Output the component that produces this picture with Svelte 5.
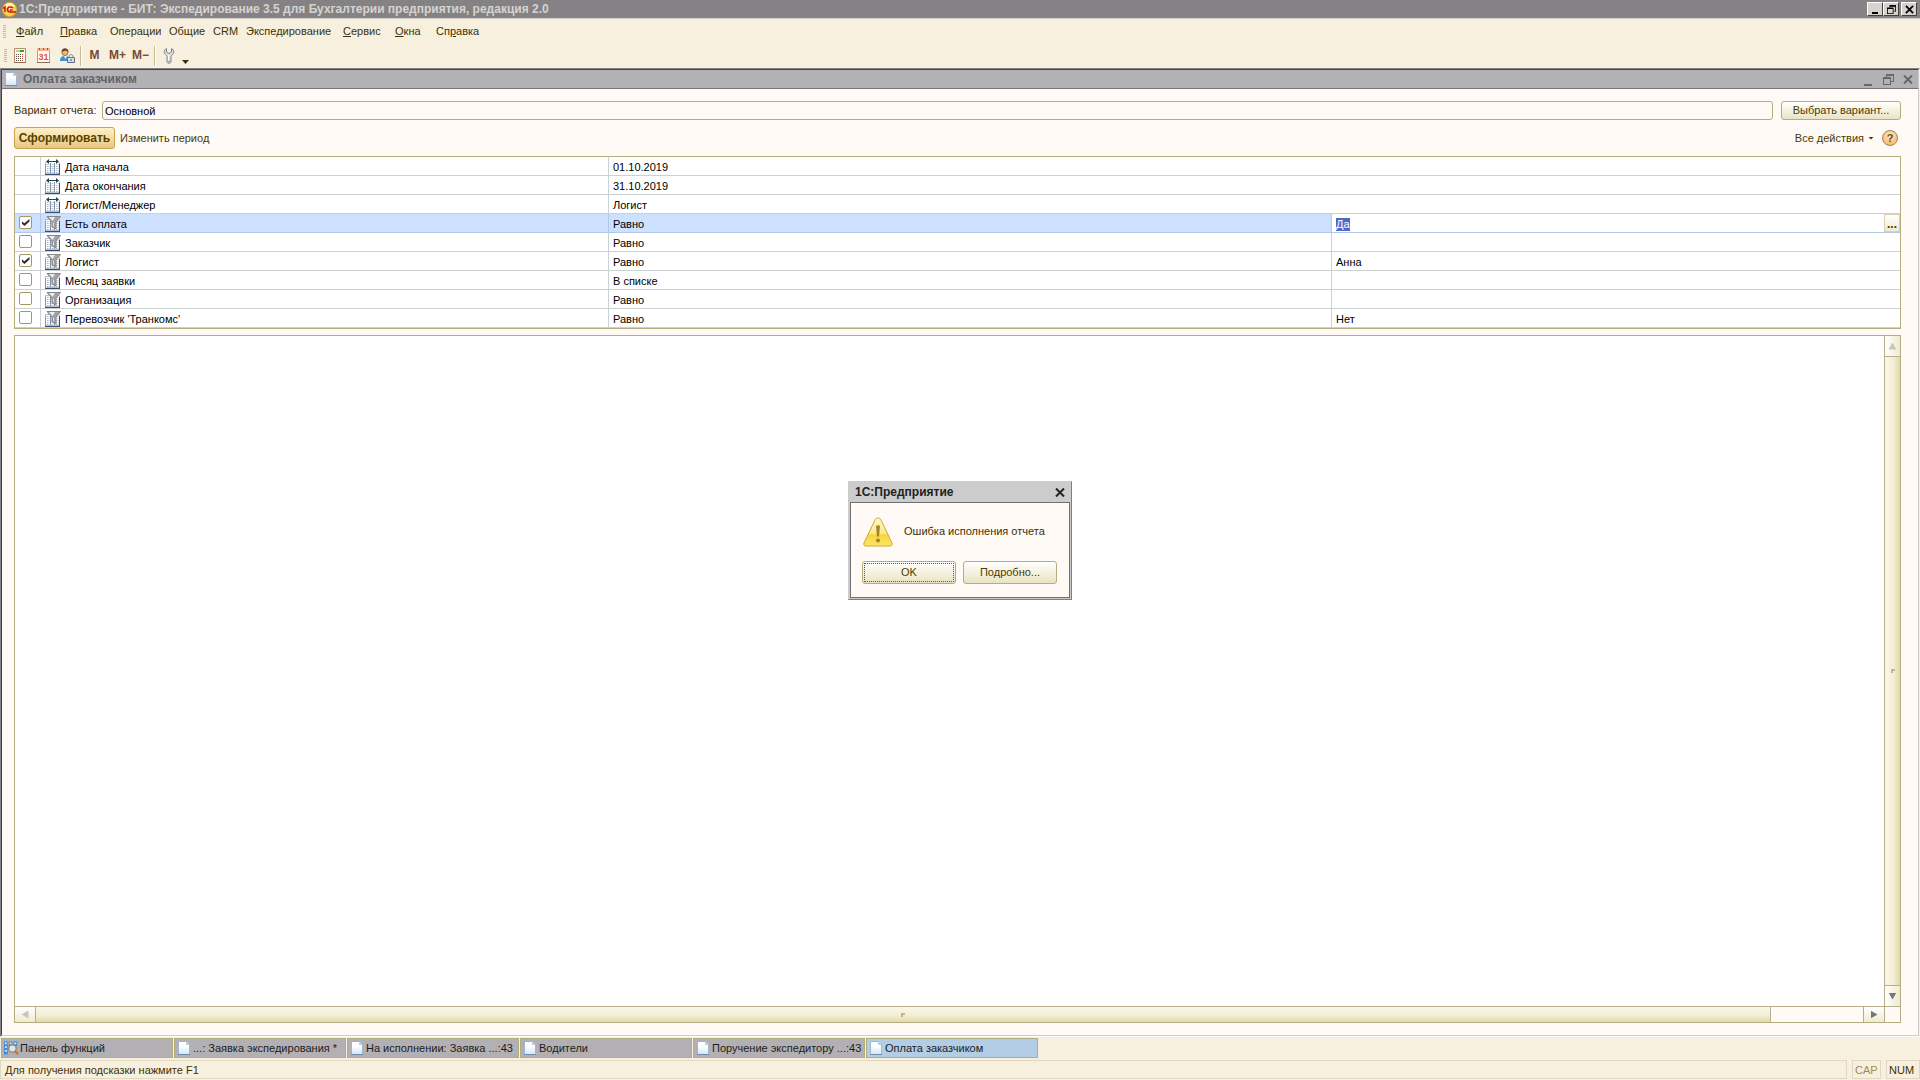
<script lang="ts">
	import { onMount } from 'svelte';

	type MenuItem = { before: string; key: string; after: string };
	type FilterRow = {
		kind: 'param' | 'filter';
		checked?: boolean;
		name: string;
		condition: string;
		value: string;
	};
	type WindowTab = { title: string; icon: 'panel' | 'doc'; active?: boolean };

	const menu: MenuItem[] = [
		{ before: '', key: 'Ф', after: 'айл' },
		{ before: '', key: 'П', after: 'равка' },
		{ before: 'Операции', key: '', after: '' },
		{ before: 'Общие', key: '', after: '' },
		{ before: 'CRM', key: '', after: '' },
		{ before: 'Экспедирование', key: '', after: '' },
		{ before: '', key: 'С', after: 'ервис' },
		{ before: '', key: 'О', after: 'кна' },
		{ before: 'Сп', key: 'р', after: 'авка' }
	];

	let rows: FilterRow[] = $state([
		{ kind: 'param', name: 'Дата начала', condition: '01.10.2019', value: '' },
		{ kind: 'param', name: 'Дата окончания', condition: '31.10.2019', value: '' },
		{ kind: 'param', name: 'Логист/Менеджер', condition: 'Логист', value: '' },
		{ kind: 'filter', checked: true, name: 'Есть оплата', condition: 'Равно', value: 'Да' },
		{ kind: 'filter', checked: false, name: 'Заказчик', condition: 'Равно', value: '' },
		{ kind: 'filter', checked: true, name: 'Логист', condition: 'Равно', value: 'Анна' },
		{ kind: 'filter', checked: false, name: 'Месяц заявки', condition: 'В списке', value: '' },
		{ kind: 'filter', checked: false, name: 'Организация', condition: 'Равно', value: '' },
		{ kind: 'filter', checked: false, name: "Перевозчик 'Транкомс'", condition: 'Равно', value: 'Нет' }
	]);

	const tabs: WindowTab[] = [
		{ title: 'Панель функций', icon: 'panel' },
		{ title: '...: Заявка экспедирования *', icon: 'doc' },
		{ title: 'На исполнении: Заявка ...:43', icon: 'doc' },
		{ title: 'Водители', icon: 'doc' },
		{ title: 'Поручение экспедитору ...:43', icon: 'doc' },
		{ title: 'Оплата заказчиком', icon: 'doc', active: true }
	];

	const selectedRow = 3;
	let variant = $state('Основной');
	let dialogOpen = $state(true);
	let editor: HTMLInputElement | null = $state(null);

	onMount(() => {
		editor?.focus();
		editor?.select();
	});

	function closeDialog() {
		dialogOpen = false;
	}
</script>

{#snippet docIcon()}
	<svg class="icon-doc" viewBox="0 0 12 14" aria-hidden="true">
		<defs>
			<linearGradient id="sheet" x1="0" y1="0" x2="0" y2="1">
				<stop offset=".4" stop-color="#fdfeff" />
				<stop offset="1" stop-color="#d3e3f5" />
			</linearGradient>
		</defs>
		<path d="M.5.5h7.500l3.500 3.500v9.500H.5z" fill="url(#sheet)" stroke="#9db6d0" />
		<path d="M8 0v4h4z" fill="#b4d3e2" />
		<path d="M0 13.500h12" stroke="#6f8cab" />
	</svg>
{/snippet}

{#snippet restoreIcon()}
	<svg class="icon-restore" viewBox="0 0 11 11" aria-hidden="true">
		<path d="M3 0h8v8H8V7h2V2H4v1H3z" fill="currentColor" />
		<path d="M0 3h8v8H0zM1 5v5h6V5z" fill="currentColor" fill-rule="evenodd" />
	</svg>
{/snippet}

{#snippet closeIcon()}
	<svg class="icon-close" viewBox="0 0 10 9" aria-hidden="true">
		<path d="M1 .5l8 8M9 .5l-8 8" stroke="currentColor" stroke-width="2" />
	</svg>
{/snippet}

{#snippet gridIcon(kind: 'param' | 'filter')}
	<svg class="icon-grid" viewBox="0 0 16 16" aria-hidden="true">
		<path d="M.5 3.500h14v11H.5z" fill="#fff" stroke="#b4bfce" />
		<path d="M5.500 4v10M9.500 4v10" stroke="#8795aa" />
		<path d="M2.500 5v9M4 5v9M7 5v9M8 5v9M11.500 5v9M13 5v9" stroke="#a9b7cb" stroke-dasharray="1 1" />
		<path d="M0 15.500h15M14.500 5v11" stroke="#38506f" />
		<path d="M.5 5v10" stroke="#8795aa" />
		{#if kind === 'param'}
			<path d="M1 3L4 0v2h7V0l3 3-3 3V4H4v2z" fill="#fff" />
			<path d="M1 2.500L4 0v2h7V0l3 2.500L11 5V3H4v2z" fill="#274455" />
		{:else}
			<path d="M2 .5h13.500L11 6v7L7 11V6z" fill="#a3a3a6" stroke="#86868a" />
			<path d="M4 1h6L7.500 5z" fill="#ededee" />
			<path d="M8.500 6.500v4" stroke="#dcdcde" />
		{/if}
	</svg>
{/snippet}

<div class="app">
	<header class="titlebar">
		<svg class="logo" viewBox="0 0 15 15" aria-hidden="true">
			<circle cx="7.500" cy="7.500" r="7" fill="#fbd04a" stroke="#e0a528" />
			<ellipse cx="7.500" cy="4" rx="5" ry="3" fill="#fff3b8" />
			<path d="M1 6.500l2-1.500v5M11 6C9.500 4.500 5.500 4.500 5.500 7.500c0 2 1.500 2.500 3 2.500H14M10.500 8H8" fill="none" stroke="#d51318" stroke-width="1.500" />
		</svg>
		<h1>1С:Предприятие - БИТ: Экспедирование 3.5 для Бухгалтерии предприятия, редакция 2.0</h1>
		<div class="window-buttons">
			<button type="button" aria-label="Свернуть"><span class="icon-min"></span></button>
			<button type="button" aria-label="Восстановить">{@render restoreIcon()}</button>
			<button type="button" class="gap" aria-label="Закрыть">{@render closeIcon()}</button>
		</div>
	</header>

	<nav class="menubar">
		<span class="grip"></span>
		{#each menu as item}
			<button type="button">{item.before}{#if item.key}<u>{item.key}</u>{/if}{item.after}</button>
		{/each}
	</nav>

	<div class="toolbar">
		<span class="grip"></span>
		<button type="button" aria-label="Калькулятор">
			<svg class="icon-tool" viewBox="0 0 16 16" aria-hidden="true">
				<path d="M1.500.5h11v14h-11z" fill="#fffdf6" stroke="#b58f6c" />
				<path d="M1 14.500h12" stroke="#8e6f53" />
				<path d="M3 3h4" stroke="#b9cfa8" stroke-width="2" />
				<path d="M7 3h4" stroke="#2ba02b" stroke-width="2" />
				<path d="M3 6.500h5M3 8.500h5M3 10.500h5M3 12.500h5" stroke="#4d4a3c" stroke-dasharray="1 1" />
				<path d="M9 6.500h2M9 8.500h2M9 10.500h2M9 12.500h2" stroke="#cb3b25" stroke-dasharray="1 1" />
			</svg>
		</button>
		<button type="button" aria-label="Календарь">
			<svg class="icon-tool" viewBox="0 0 16 16" aria-hidden="true">
				<path d="M1.500.5h12v14h-12z" fill="#fffaf4" stroke="#c99a78" />
				<path d="M1 0h13v3H1z" fill="#f0b58d" />
				<path d="M3.500 0v2M7.500 0v2M11.500 0v2" stroke="#9a5c36" />
				<path d="M1 14.500h13" stroke="#8e6f53" />
				<text x="7.500" y="12" text-anchor="middle" class="day">31</text>
			</svg>
		</button>
		<button type="button" aria-label="Пользователи">
			<svg class="icon-tool" viewBox="0 0 16 16" aria-hidden="true">
				<path d="M1 13C1 9 3 8 6 8s5 1 5 5z" fill="#3f93cc" />
				<path d="M5 8l1.500 3L8 8z" fill="#fff" />
				<circle cx="6" cy="4.500" r="3" fill="#f2b97c" stroke="#a56a35" />
				<path d="M2.500 4c0-5 7-5 7 0l-3-1.500z" fill="#6b421f" />
				<path d="M10 10V8.500c0-2.500 4-2.500 4 0V10" fill="none" stroke="#70819a" />
				<path d="M8.500 9.500h7v5h-7z" fill="#d5dfea" stroke="#61738c" />
				<path d="M12 11v2" stroke="#44566b" />
			</svg>
		</button>
		<span class="divider"></span>
		<button type="button" class="memory">M</button>
		<button type="button" class="memory">M+</button>
		<button type="button" class="memory">M−</button>
		<span class="divider"></span>
		<button type="button" aria-label="Настройки">
			<svg class="icon-tool" viewBox="0 0 16 16" aria-hidden="true">
				<path d="M5.500.5v3.500L8 5.500 10.500 4V.5c3 1.500 3 5 0 7L10 8.500v5c0 2.500-4 2.500-4 0v-5L5.500 7.500c-3-2-3-5.500 0-7z" fill="#dcdcdc" stroke="#858585" />
				<path d="M7.500 7v6" stroke="#fff" />
				<circle cx="8" cy="13.500" r=".7" fill="#666" />
			</svg>
		</button>
		<button type="button" class="more" aria-label="Добавить или удалить кнопки"></button>
	</div>

	<section class="mdi">
		<header class="mdi-title">
			{@render docIcon()}
			<h2>Оплата заказчиком</h2>
			<div class="mdi-buttons">
				<button type="button" aria-label="Свернуть окно"><span class="icon-min"></span></button>
				<button type="button" aria-label="Восстановить окно">{@render restoreIcon()}</button>
				<button type="button" aria-label="Закрыть окно">{@render closeIcon()}</button>
			</div>
		</header>

		<main class="form">
			<div class="variant">
				<label for="variant">Вариант отчета:</label>
				<input id="variant" type="text" bind:value={variant} />
				<button type="button" class="btn">Выбрать вариант...</button>
			</div>

			<div class="commands">
				<button type="button" class="btn-primary">Сформировать</button>
				<button type="button" class="link">Изменить период</button>
				<button type="button" class="link actions">Все действия<span class="caret"></span></button>
				<button type="button" class="help" aria-label="Справка">?</button>
			</div>

			<table class="filters">
				<colgroup>
					<col class="col-check" />
					<col class="col-name" />
					<col class="col-condition" />
					<col />
				</colgroup>
				<tbody>
					{#each rows as row, index (row.name)}
						<tr class:selected={index === selectedRow}>
							<td class="check">
								{#if row.kind === 'filter'}
									<input type="checkbox" aria-label={row.name} bind:checked={row.checked} />
								{/if}
							</td>
							<td>
								<span class="name">{@render gridIcon(row.kind)}{row.name}</span>
							</td>
							<td colspan={row.kind === 'param' ? 2 : 1}>{row.condition}</td>
							{#if row.kind === 'filter'}
								{#if index === selectedRow}
									<td class="edit">
										<div class="editor">
											<input type="text" aria-label={row.name} bind:value={row.value} bind:this={editor} />
											<button type="button">...</button>
										</div>
									</td>
								{:else}
									<td>{row.value}</td>
								{/if}
							{/if}
						</tr>
					{/each}
				</tbody>
			</table>

			<div class="report">
				<div class="sheet"></div>
				<div class="vscroll">
					<button type="button" aria-label="Вверх"><span class="arrow up"></span></button>
					<div class="thumb"><span class="dot"></span></div>
					<button type="button" aria-label="Вниз"><span class="arrow down"></span></button>
				</div>
				<div class="hscroll">
					<button type="button" aria-label="Влево"><span class="arrow left"></span></button>
					<div class="thumb"><span class="dot"></span></div>
					<div class="track"></div>
					<button type="button" aria-label="Вправо"><span class="arrow right"></span></button>
				</div>
				<div class="corner"></div>
			</div>
		</main>
	</section>

	<nav class="tabs">
		{#each tabs as tab}
			<button type="button" class:active={tab.active}>
				{#if tab.icon === 'panel'}
					<svg class="icon-panel" viewBox="0 0 16 16" aria-hidden="true">
						<path d="M0 1h4v14H0zM5 1h4v6H5zM10 1h4v5h-4z" fill="#3c8be0" />
						<path d="M1 2h2v2H1zM6 2h2v2H6zM11 2h2v2h-2zM1 6h2v2H1zM1 10h2v2H1z" fill="#d5ebff" />
						<circle cx="9" cy="8.500" r="4" fill="#d7e9f5" stroke="#b08258" stroke-width="1.500" />
						<path d="M12 11.500l3 3" stroke="#c9742a" stroke-width="2.500" />
					</svg>
				{:else}
					{@render docIcon()}
				{/if}
				<span>{tab.title}</span>
			</button>
		{/each}
	</nav>

	<footer class="status">
		<span class="hint">Для получения подсказки нажмите F1</span>
		<span class="key off">CAP</span>
		<span class="key">NUM</span>
	</footer>

	{#if dialogOpen}
		<div class="overlay">
			<div class="dialog" role="alertdialog" aria-labelledby="dialog-title" aria-describedby="dialog-text">
				<header>
					<h2 id="dialog-title">1С:Предприятие</h2>
					<button type="button" aria-label="Закрыть" onclick={closeDialog}>{@render closeIcon()}</button>
				</header>
				<div class="dialog-body">
					<div class="message">
						<svg viewBox="0 0 30 30" aria-hidden="true">
							<defs>
								<linearGradient id="warn" x1="0" y1="0" x2="0" y2="1">
									<stop offset="0" stop-color="#fdf7d0" />
									<stop offset=".55" stop-color="#fbe88a" />
									<stop offset=".6" stop-color="#f6d63a" />
									<stop offset="1" stop-color="#fbe567" />
								</linearGradient>
							</defs>
							<path d="M15 1c1.500 0 2.500.7 3 2l11 23c.6 1.800 0 3-2 3H3c-2 0-2.600-1.200-2-3L12 3c.5-1.300 1.500-2 3-2z" fill="url(#warn)" stroke="#d3a92c" />
							<path d="M13 8.500h4l-1 11h-2z" fill="#a5822a" />
							<circle cx="15" cy="23.500" r="2" fill="#a5822a" />
						</svg>
						<p id="dialog-text">Ошибка исполнения отчета</p>
					</div>
					<div class="dialog-buttons">
						<button type="button" class="btn default" onclick={closeDialog}>OK</button>
						<button type="button" class="btn">Подробно...</button>
					</div>
				</div>
			</div>
		</div>
	{/if}
</div>

<style>
	:global(body) {
		background: #f7f0de;
	}

	.app {
		display: flex;
		flex-direction: column;
		min-height: 100vh;
		background: #f7f0de;
		color: #403003;
		font: 11px/13px 'Liberation Sans', Arial, sans-serif;
	}

	.app :is(*, *::before, *::after) {
		box-sizing: border-box;
	}

	button,
	input {
		margin: 0;
		padding: 0;
		border: 0;
		border-radius: 0;
		background: none;
		color: inherit;
		font: inherit;
		outline: none;
		white-space: nowrap;
	}

	h1,
	h2,
	p {
		margin: 0;
		font-size: 12px;
		white-space: nowrap;
	}

	p {
		font-size: 11px;
	}

	svg {
		display: block;
		flex: none;
	}

	.titlebar {
		display: flex;
		align-items: center;
		gap: 2px;
		height: 19px;
		padding: 0 3px 0 2px;
		border-bottom: 1px solid #d4d0c8;
		background: #848284;
		color: #d6d3ce;
	}

	.logo {
		width: 15px;
		height: 15px;
	}

	.window-buttons {
		display: flex;
		margin-left: auto;
	}

	.window-buttons button {
		display: grid;
		place-items: center;
		width: 16px;
		height: 14px;
		border: 1px solid;
		border-color: #fff #404040 #404040 #fff;
		background: #d6d3ce;
		color: #000;
	}

	.window-buttons .gap {
		margin-left: 2px;
	}

	.icon-min {
		width: 8px;
		height: 2px;
		align-self: end;
		margin-bottom: 1px;
		background: currentColor;
	}

	.window-buttons .icon-min {
		width: 6px;
	}

	.icon-restore {
		width: 11px;
		height: 11px;
	}

	.icon-close {
		width: 10px;
		height: 9px;
	}

	.window-buttons .icon-restore,
	.window-buttons .icon-close {
		width: 9px;
		height: 9px;
	}

	.menubar {
		display: grid;
		grid-template-columns: 13px 44px 50px 59px 44px 33px 97px 52px 41px auto;
		justify-content: start;
		align-items: center;
		height: 24px;
		padding-left: 3px;
	}

	.menubar button {
		text-align: left;
	}

	.grip {
		width: 3px;
		height: 13px;
		background: repeating-linear-gradient(#c5bc90 0 1px, transparent 1px 2px);
	}

	.toolbar {
		display: flex;
		align-items: center;
		height: 25px;
		padding-left: 4px;
	}

	.toolbar button {
		display: grid;
		place-items: center;
		width: 23px;
		height: 20px;
	}

	.toolbar .grip {
		margin-right: 2px;
	}

	.icon-tool {
		width: 16px;
		height: 16px;
	}

	.day {
		font: bold 9px 'Liberation Sans', Arial, sans-serif;
		fill: #e8502f;
	}

	.divider {
		width: 2px;
		height: 20px;
		margin: 0 1px 0 2px;
		border-left: 1px solid #c6bb94;
		background: #fff;
	}

	.toolbar .memory {
		color: #7b4a32;
		font-size: 12px;
		font-weight: bold;
	}

	.toolbar .more {
		align-self: end;
		width: 7px;
		height: 4px;
		margin: 0 0 4px 2px;
		background: #403003;
		clip-path: polygon(0 0, 100% 0, 50% 100%);
	}

	.mdi {
		flex: 1;
		display: flex;
		flex-direction: column;
		border: 1px solid #848284;
		border-right-color: #f7f0de;
		border-bottom-color: #fff;
		background: #fffaf5;
	}

	.mdi-title,
	.form {
		border-left: 1px solid #404046;
		border-right: 1px solid #ccc;
	}

	.mdi-title {
		display: flex;
		align-items: center;
		gap: 6px;
		height: 20px;
		padding: 0 0 0 3px;
		border-top: 1px solid #404046;
		border-bottom: 1px solid #77757a;
		background: #b3b1b4;
		color: #636466;
	}

	.icon-doc {
		width: 12px;
		height: 14px;
	}

	.mdi-buttons {
		display: flex;
		margin-left: auto;
		color: #66686a;
	}

	.mdi-buttons button {
		display: grid;
		place-items: center;
		width: 20px;
		height: 13px;
	}

	.mdi-buttons .icon-min {
		margin-bottom: 0;
	}

	.form {
		flex: 1;
		display: flex;
		flex-direction: column;
		padding: 12px 17px 12px 12px;
		border-bottom: 1px solid #ccc;
	}

	.variant {
		display: flex;
		align-items: center;
	}

	.variant label {
		width: 88px;
	}

	.variant input {
		flex: 1;
		height: 19px;
		padding: 1px 3px 0 2px;
		border: 1px solid #b3ad7f;
		border-radius: 3px;
		color: #000;
	}

	.btn {
		height: 19px;
		border: 1px solid #b3ad7f;
		border-radius: 3px;
		background: linear-gradient(#fff, #f5f1df 50%, #e9e3c4);
		color: #4d3b00;
	}

	.variant .btn {
		width: 120px;
		margin-left: 8px;
	}

	.commands {
		display: flex;
		align-items: center;
		margin: 7px 0;
	}

	.btn-primary {
		width: 101px;
		height: 22px;
		border: 1px solid #c9a448;
		border-radius: 3px;
		background: linear-gradient(#fdf0cc, #f6dda0 50%, #e8c583);
		color: #5a4100;
		font-size: 12px;
		font-weight: bold;
	}

	.link {
		margin-left: 5px;
		color: #4d3b00;
	}

	.actions {
		display: flex;
		align-items: center;
		gap: 4px;
		margin-left: auto;
	}

	.caret {
		width: 6px;
		height: 3px;
		background: currentColor;
		clip-path: polygon(0 0, 100% 0, 50% 100%);
	}

	.help {
		width: 16px;
		height: 16px;
		margin: 0 3px 0 8px;
		border: 1px solid #a0845c;
		border-radius: 50%;
		background: radial-gradient(circle at 50% 35%, #ffe9c8, #f9b964 80%);
		color: #6b4a18;
		font-weight: bold;
		line-height: 12px;
	}

	.filters {
		width: 100%;
		border: 1px solid #b3ad7f;
		border-collapse: separate;
		border-spacing: 0;
		table-layout: fixed;
		background: #fff;
		color: #000;
	}

	.col-check {
		width: 26px;
	}

	.col-name {
		width: 568px;
	}

	.col-condition {
		width: 723px;
	}

	.filters td {
		height: 19px;
		padding: 2px 4px 0;
		border-right: 1px solid #c9d1d9;
		border-bottom: 1px solid #c9d1d1;
		white-space: nowrap;
	}

	.filters td:last-child {
		border-right: 0;
	}

	.filters .selected td {
		border-color: #b3c8e8;
		background: #cce0ff;
	}

	.name {
		display: flex;
		align-items: center;
		gap: 4px;
		height: 16px;
	}

	.icon-grid {
		width: 16px;
		height: 16px;
	}

	.filters .check {
		padding: 0 5px 1px 4px;
	}

	.check input {
		appearance: none;
		display: grid;
		place-items: center;
		width: 13px;
		height: 13px;
		border: 1px solid #a39766;
		border-radius: 2px;
		background: #fff;
	}

	.check input:checked::before {
		content: '';
		width: 8px;
		height: 7px;
		background: #303030;
		clip-path: polygon(0 30%, 35% 60%, 100% 0, 100% 35%, 38% 100%, 0 65%);
	}

	.filters .selected .edit {
		padding: 0;
		background: #fff;
	}

	.editor {
		display: flex;
		height: 18px;
	}

	.editor input {
		flex: 1;
		min-width: 0;
		padding: 2px 4px 0;
	}

	.editor input::selection {
		background: #4f69c6;
		color: #fff;
	}

	.editor button {
		width: 16px;
		padding-top: 2px;
		border: 1px solid #d9d0b0;
		background: linear-gradient(#fff, #f0e9cf);
		color: #4d3b00;
		font-size: 12px;
		font-weight: bold;
	}

	.report {
		flex: 1;
		display: grid;
		grid-template-columns: minmax(0, 1fr) 16px;
		grid-template-rows: minmax(0, 1fr) 16px;
		margin-top: 6px;
		border: 1px solid #b3ad7f;
		background: #fff;
	}

	.vscroll,
	.hscroll {
		display: flex;
	}

	.vscroll {
		flex-direction: column;
		border-left: 1px solid #b8ae8e;
	}

	.hscroll {
		border-top: 1px solid #b8ae8e;
	}

	.corner {
		border-top: 1px solid #b8ae8e;
		border-left: 1px solid #b8ae8e;
		background: #fffaf5;
	}

	.vscroll button,
	.hscroll button,
	.thumb {
		display: grid;
		place-items: center;
	}

	.vscroll button {
		height: 20px;
		background: linear-gradient(90deg, #fff, #f0ead0);
	}

	.hscroll button {
		width: 20px;
		background: linear-gradient(#fff, #f0ead0);
	}

	.vscroll .thumb {
		flex: 1;
		border: solid #b8ae8e;
		border-width: 1px 0;
		background: linear-gradient(90deg, #faf7ea, #f3edd0 60%, #e2d9ae);
	}

	.hscroll .thumb {
		flex: 1736;
		border: solid #b8ae8e;
		border-width: 0 1px;
		background: linear-gradient(#faf7ea, #f3edd0 60%, #e2d9ae);
	}

	.track {
		flex: 92;
		border-right: 1px solid #b8ae8e;
		background: #fffaf5;
	}

	.dot {
		width: 4px;
		height: 4px;
		border: solid #c0b798;
		border-width: 2px 0 0 2px;
	}

	.arrow {
		width: 8px;
		height: 7px;
		background: #77747a;
	}

	.arrow.left,
	.arrow.right {
		width: 7px;
		height: 8px;
	}

	.arrow.up {
		background: #c9c5b8;
		clip-path: polygon(50% 0, 100% 100%, 0 100%);
	}

	.arrow.down {
		clip-path: polygon(0 0, 100% 0, 50% 100%);
	}

	.arrow.left {
		background: #c9c5b8;
		clip-path: polygon(0 50%, 100% 0, 100% 100%);
	}

	.arrow.right {
		clip-path: polygon(0 0, 100% 50%, 0 100%);
	}

	.tabs {
		display: flex;
		gap: 1px;
		padding: 1px;
	}

	.tabs button {
		display: flex;
		align-items: center;
		gap: 3px;
		width: 172px;
		height: 20px;
		padding: 0 3px;
		overflow: hidden;
		border: 1px solid #b3ad7f;
		background: #b3b0b3;
		color: #1c1c1c;
	}

	.tabs button:first-child {
		gap: 1px;
		padding: 0 2px;
	}

	.tabs .active {
		background: #b3cde5;
	}

	.icon-panel {
		width: 15px;
		height: 16px;
	}

	.status {
		display: flex;
		gap: 5px;
		margin-top: 1px;
		padding-bottom: 1px;
	}

	.status span {
		height: 19px;
		padding: 3px 4px 0;
		border: 1px solid #e0d9c0;
	}

	.status .hint {
		flex: 1;
	}

	.status .key {
		width: 29px;
		padding: 3px 2px 0;
	}

	.status .key:last-child {
		width: 34px;
	}

	.status .off {
		color: #a08b50;
	}

	.overlay {
		position: fixed;
		inset: 0;
		display: grid;
		place-items: center;
	}

	.dialog {
		width: 224px;
		padding: 0 1px 1px;
		border: 1px solid #ccc;
		border-right-color: #808080;
		border-bottom-color: #808080;
		background: #ccc;
	}

	.dialog header {
		display: flex;
		align-items: center;
		justify-content: space-between;
		height: 20px;
		padding: 2px 5px 0;
		color: #222;
	}

	.dialog-body {
		padding: 14px 12px 13px 11px;
		border: 1px solid #707074;
		background: #fffaf5;
	}

	.message {
		display: flex;
		align-items: center;
		gap: 11px;
		padding-left: 1px;
	}

	.message svg {
		width: 30px;
		height: 30px;
	}

	.dialog-buttons {
		display: flex;
		gap: 7px;
		margin-top: 14px;
	}

	.dialog-buttons .btn {
		flex: 1;
		height: 23px;
	}

	.dialog-buttons .default {
		outline: 1px dotted #555;
		outline-offset: -3px;
	}
</style>
